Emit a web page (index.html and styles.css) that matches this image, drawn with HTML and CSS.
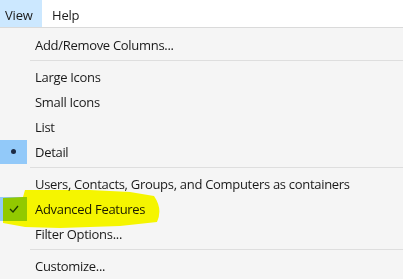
FILE: index.html
```html
<!DOCTYPE html>
<html>
<head>
<meta charset="utf-8">
<link rel="stylesheet" href="styles.css">
</head>
<body>
<div class="menubar">
  <div class="top active">View</div>
  <div class="top">Help</div>
</div>
<div class="menu">
  <div class="item"><span class="gut"></span><span class="label">Add/Remove Columns...</span></div>
  <div class="sep"></div>
  <div class="item"><span class="gut"></span><span class="label">Large Icons</span></div>
  <div class="item"><span class="gut"></span><span class="label">Small Icons</span></div>
  <div class="item"><span class="gut"></span><span class="label">List</span></div>
  <div class="item"><span class="gut sel"><span class="dot"></span></span><span class="label">Detail</span></div>
  <div class="sep"></div>
  <div class="item"><span class="gut"></span><span class="label">Users, Contacts, Groups, and Computers as containers</span></div>
  <div class="item"><span class="gut sel"><svg class="check" width="10" height="8" viewBox="0 0 10 8"><path d="M1 4 L4 7 L9 1" fill="none" stroke="#1e3a2a" stroke-width="1.3"/></svg></span><span class="label">Advanced Features</span></div>
  <div class="item"><span class="gut"></span><span class="label">Filter Options...</span></div>
  <div class="sep"></div>
  <div class="item"><span class="gut"></span><span class="label">Customize...</span></div>
</div>
<svg class="hl" width="403" height="279" viewBox="0 0 403 279">
  <path d="M3 198 L23 197 L25 190 L90 190 L130 192 L154 196 Q163 209 157 222 L120 226 L60 228 L25 227 L3 223 Z" fill="#ffff00"/>
</svg>
</body>
</html>
```
FILE: styles.css
```css
html, body { margin: 0; padding: 0; }
body {
  width: 403px; height: 279px; overflow: hidden;
  background: #f5f5f5;
  font-family: "Open Sans", "Noto Sans", sans-serif;
  font-size: 13px;
  color: #1a1a1a;
  position: relative;
}
.menubar {
  display: flex;
  height: 27px;
  background: #fff;
  border-bottom: 1px solid #dadada;
}
.top {
  padding: 0 6px 0 5px;
  line-height: 31px;
  height: 27px;
  font-size: 13px;
  letter-spacing: -0.2px;
  margin-right: 5px;
}
.top.active { background: #cce8ff; width: 31px; }
.menu { padding-top: 4px; }
.item {
  display: flex;
  align-items: center;
  height: 25px;
}
.gut {
  width: 27px; height: 24px;
  margin-right: 8px;
  display: flex; align-items: center; justify-content: center;
  flex: none;
}
.gut.sel { background: #92c9f9; }
.dot { width: 5px; height: 5px; border-radius: 50%; background: #1c2a44; }
.label { font-size: 13px; letter-spacing: -0.3px; white-space: nowrap; }
.sep { height: 1px; background: #dedede; margin: 3px 0 3px 30px; }
.hl { position: absolute; left: 0; top: 0; mix-blend-mode: multiply; pointer-events: none; }
```
